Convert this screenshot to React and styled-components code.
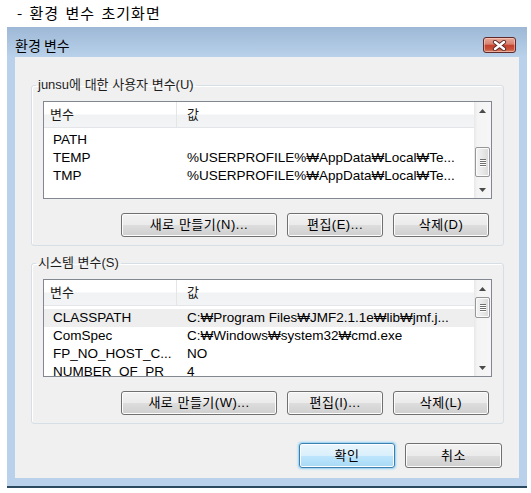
import React from 'react'
import styled, { createGlobalStyle, css } from 'styled-components'

const userVars = [
	{ name: 'PATH', value: '' },
	{ name: 'TEMP', value: '%USERPROFILE%₩AppData₩Local₩Te...' },
	{ name: 'TMP', value: '%USERPROFILE%₩AppData₩Local₩Te...' }
]

const systemVars = [
	{ name: 'CLASSPATH', value: 'C:₩Program Files₩JMF2.1.1e₩lib₩jmf.j...', selected: true },
	{ name: 'ComSpec', value: 'C:₩Windows₩system32₩cmd.exe' },
	{ name: 'FP_NO_HOST_C...', value: 'NO' },
	{ name: 'NUMBER_OF_PR', value: '4' }
]

function Arrow({ down }) {
	return (
		<svg width="7" height="4" viewBox="0 0 7 4">
			<path d={down ? 'M0 0 L7 0 L3.5 4 Z' : 'M0 4 L7 4 L3.5 0 Z'} fill="#4a4a4a" />
		</svg>
	)
}

function CloseIcon() {
	return (
		<svg width="15" height="11" viewBox="0 0 15 11">
			<path d="M3 2 L12 9 M12 2 L3 9" stroke="#5a2b25" strokeWidth="4.2" strokeLinecap="round" />
			<path d="M3 2 L12 9 M12 2 L3 9" stroke="#ffffff" strokeWidth="2.4" strokeLinecap="round" />
		</svg>
	)
}

function VarList({ rows, thumbTop, thumbSize }) {
	return (
		<ListBox>
			<ListContent>
				<HeaderRow>
					<HeaderCell $first>변수</HeaderCell>
					<HeaderCell>값</HeaderCell>
				</HeaderRow>
				<Rows>
					{rows.map(row => (
						<Row key={row.name} $selected={row.selected}>
							<Cell $first>{row.name}</Cell>
							<Cell>{row.value}</Cell>
						</Row>
					))}
				</Rows>
			</ListContent>
			<ScrollBar>
				<ArrowButton>
					<Arrow />
				</ArrowButton>
				<Track>
					<Thumb $top={thumbTop} $size={thumbSize}>
						<Grip />
						<Grip />
						<Grip />
						<Grip />
					</Thumb>
				</Track>
				<ArrowButton>
					<Arrow down />
				</ArrowButton>
			</ScrollBar>
		</ListBox>
	)
}

function VarGroup({ title, rows, thumbTop, thumbSize, labels, spaced }) {
	return (
		<Group $spaced={spaced}>
			<Legend>{title}</Legend>
			<GroupBody>
				<VarList rows={rows} thumbTop={thumbTop} thumbSize={thumbSize} />
				<ButtonRow>
					<Button $w={156}>{labels[0]}</Button>
					<Button $w={96}>{labels[1]}</Button>
					<Button $w={96}>{labels[2]}</Button>
				</ButtonRow>
			</GroupBody>
		</Group>
	)
}

export default function App() {
	return (
		<Page>
			<GlobalStyle />
			<Caption>- 환경 변수 초기화면</Caption>
			<Window>
				<TitleBar>
					<Title>환경 변수</Title>
					<CloseButton>
						<CloseIcon />
					</CloseButton>
				</TitleBar>
				<Client>
					<VarGroup
						title="junsu에 대한 사용자 변수(U)"
						rows={userVars}
						thumbTop={28}
						thumbSize={30}
						labels={['새로 만들기(N)...', '편집(E)...', '삭제(D)']}
					/>
					<VarGroup
						spaced
						title="시스템 변수(S)"
						rows={systemVars}
						thumbTop={0}
						thumbSize={21}
						labels={['새로 만들기(W)...', '편집(I)...', '삭제(L)']}
					/>
					<Footer>
						<Button $w={96} $h={25} $default>확인</Button>
						<Button $w={97} $h={25}>취소</Button>
					</Footer>
				</Client>
			</Window>
		</Page>
	)
}

const GlobalStyle = createGlobalStyle`
	body {
		margin: 0;
		background: #ffffff;
		font-family: "Liberation Sans", "Noto Sans CJK KR", sans-serif;
	}
`

const Page = styled.div`
	width: 531px;
	height: 493px;
	overflow: hidden;
`

const Caption = styled.div`
	height: 27px;
	padding-left: 17px;
	font-family: "Noto Sans CJK KR", sans-serif;
	font-size: 15px;
	line-height: 26px;
	letter-spacing: 1px;
	word-spacing: 2px;
	color: #000;
`

const Window = styled.div`
	margin-left: 7px;
	width: 520px;
	height: 461px;
	box-sizing: border-box;
	display: flex;
	flex-direction: column;
	background: linear-gradient(to bottom, #9db8d6 0, #b9d1ea 30px, #b9d1ea 100%);
	border-bottom: 2px solid #2c4a5f;
`

const TitleBar = styled.div`
	height: 30px;
	box-sizing: border-box;
	padding: 6px 11px 0 8px;
	display: flex;
	align-items: center;
	justify-content: space-between;
`

const Title = styled.div`
	font-family: "Noto Sans CJK KR", sans-serif;
	font-size: 14px;
	line-height: 20px;
	color: #000;
`

const CloseButton = styled.div`
	width: 33px;
	height: 16px;
	box-sizing: border-box;
	border: 1px solid #5e2a2a;
	border-radius: 3px;
	display: flex;
	align-items: center;
	justify-content: center;
	background: linear-gradient(to bottom, #e8a898 0%, #d98070 45%, #c4412c 50%, #c8513a 80%, #dc8a6e 100%);
	box-shadow: inset 0 0 0 1px rgba(255, 220, 210, 0.5);
`

const Client = styled.div`
	flex: 1;
	margin: 0 8px 8px 8px;
	background: #f0f0f0;
	padding: 20px 15px 0 16px;
	display: flex;
	flex-direction: column;
`

const Group = styled.fieldset`
	margin: ${p => (p.$spaced ? '9px' : '0')} 0 0 0;
	padding: 0;
	min-inline-size: 0;
	border: 1px solid #d5dfe5;
	border-radius: 3px;
	box-shadow: inset 1px 1px 0 #ffffff;
`

const Legend = styled.legend`
	margin-left: 4px;
	padding: 0 2px;
	font-size: 13px;
	line-height: 16px;
	color: #1e1e1e;
`

const GroupBody = styled.div`
	padding: 8px 11px 8px 11px;
	display: flex;
	flex-direction: column;
`

const ListBox = styled.div`
	height: 98px;
	box-sizing: border-box;
	border: 1px solid #828790;
	background: #ffffff;
	display: flex;
	overflow: hidden;
`

const ListContent = styled.div`
	flex: 1;
	display: flex;
	flex-direction: column;
	overflow: hidden;
`

const HeaderRow = styled.div`
	height: 26px;
	flex-shrink: 0;
	box-sizing: border-box;
	display: flex;
	background: linear-gradient(to bottom, #ffffff 0%, #ffffff 48%, #f1f2f4 52%, #f3f4f6 100%);
	border-bottom: 1px solid #e3e5e8;
`

const HeaderCell = styled.div`
	flex: ${p => (p.$first ? '0 0 133px' : '1')};
	box-sizing: border-box;
	padding-left: ${p => (p.$first ? '6px' : '10px')};
	border-right: ${p => (p.$first ? '1px solid #e5e5e5' : 'none')};
	font-size: 13px;
	line-height: 25px;
	color: #1a1a1a;
`

const Rows = styled.div`
	padding-top: 3px;
	display: flex;
	flex-direction: column;
`

const Row = styled.div`
	height: 18px;
	flex-shrink: 0;
	display: flex;
	background: ${p => (p.$selected ? '#eeeeee' : 'transparent')};
`

const Cell = styled.div`
	flex: ${p => (p.$first ? '0 0 133px' : '1')};
	box-sizing: border-box;
	padding-left: ${p => (p.$first ? '9px' : '10px')};
	font-size: 13.5px;
	line-height: 18px;
	color: #000;
	white-space: nowrap;
	overflow: hidden;
`

const ScrollBar = styled.div`
	width: 17px;
	flex-shrink: 0;
	display: flex;
	flex-direction: column;
	background: linear-gradient(to right, #e8e8e8 0%, #f4f4f4 20%, #f6f6f6 100%);
`

const ArrowButton = styled.div`
	height: 17px;
	flex-shrink: 0;
	display: flex;
	align-items: center;
	justify-content: center;
`

const Track = styled.div`
	flex: 1;
	display: flex;
	flex-direction: column;
`

const Thumb = styled.div`
	margin: ${p => p.$top}px 1px 0 1px;
	height: ${p => p.$size}px;
	box-sizing: border-box;
	border: 1px solid #979797;
	border-radius: 2px;
	background: linear-gradient(to right, #f4f4f4 0%, #e8e8e8 50%, #d9d9d9 100%);
	box-shadow: inset 0 0 0 1px #fbfbfb;
	display: flex;
	flex-direction: column;
	align-items: center;
	justify-content: center;
	gap: 1px;
`

const Grip = styled.div`
	width: 6px;
	height: 1px;
	background: #6f6f6f;
	box-shadow: 0 1px 0 #ffffff;
`

const ButtonRow = styled.div`
	margin-top: 14px;
	padding-right: 3px;
	display: flex;
	justify-content: flex-end;
	gap: 10px;
`

const Button = styled.button`
	width: ${p => p.$w}px;
	height: ${p => p.$h || 24}px;
	box-sizing: border-box;
	padding: 0;
	border: 1px solid #707070;
	border-radius: 3px;
	background: linear-gradient(to bottom, #f2f2f2 0%, #ebebeb 50%, #dddddd 51%, #cfcfcf 100%);
	box-shadow: inset 0 0 0 1px #fcfcfc;
	font-family: "Liberation Sans", "Noto Sans CJK KR", sans-serif;
	font-size: 13px;
	line-height: 20px;
	letter-spacing: 0.5px;
	color: #000;
	${p =>
		p.$default &&
		css`
			border-color: #3c7fb1;
			background: linear-gradient(to bottom, #eaf6fd 0%, #d9f0fc 50%, #bee6fd 51%, #a7d9f5 100%);
			box-shadow: inset 0 0 0 1px #ffffff, 0 0 2px 1px #8fd0f2;
		`}
`

const Footer = styled.div`
	margin-top: 19px;
	padding-right: 2px;
	display: flex;
	justify-content: flex-end;
	gap: 10px;
`
